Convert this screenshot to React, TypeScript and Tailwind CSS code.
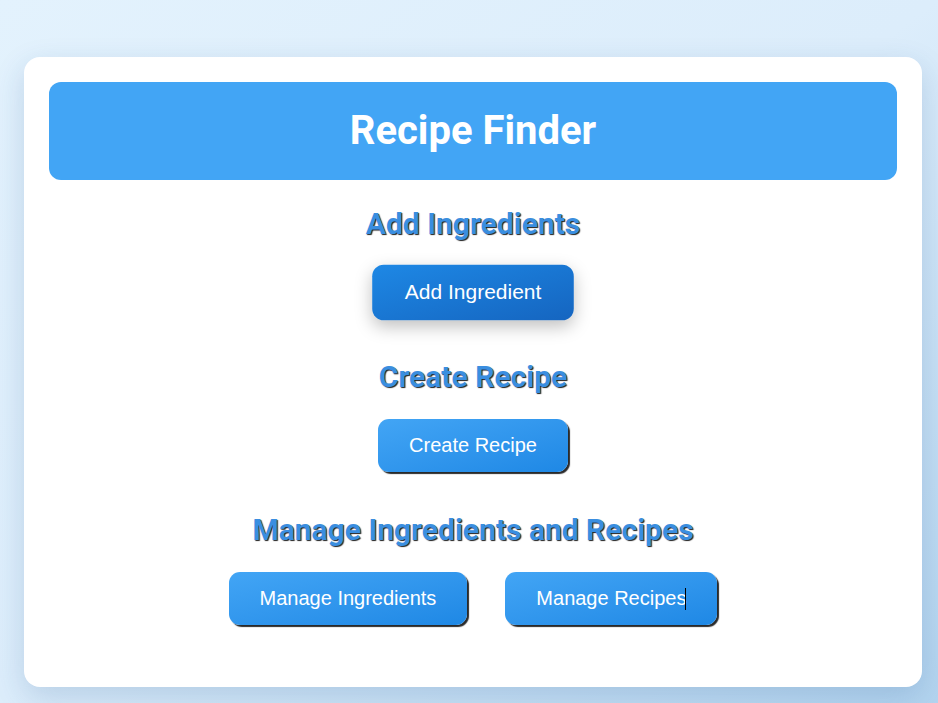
const sections = [
    { title: "Add Ingredients", buttons: ["Add Ingredient"] },
    { title: "Create Recipe", buttons: ["Create Recipe"] },
    { title: "Manage Ingredients and Recipes", buttons: ["Manage Ingredients", "Manage Recipes"] },
];

const Button: React.FC<{ label: string; hovered?: boolean; caret?: boolean }> = ({ label, hovered, caret }) => (
    <button
        className={
            hovered
                ? "cursor-pointer rounded-[11px] px-[31px] py-[15px] text-[20px] leading-[23px] text-white scale-[1.05] bg-gradient-to-br from-[#1e88e5] to-[#1565c0] shadow-[0_6px_16px_rgba(0,0,0,0.25)]"
                : "cursor-pointer rounded-[11px] px-[31px] py-[15px] text-[20px] leading-[23px] text-white bg-gradient-to-br from-[#42a5f5] to-[#1e88e5] shadow-[2px_2px_1px_#2a2a2a]"
        }
        style={{ fontFamily: '"Liberation Sans", Arial, sans-serif' }}
    >
        {label}
        {caret && <span className="inline-block w-px h-[22px] bg-black align-middle -ml-[1px] -mt-[2px]" />}
    </button>
);

export default function App() {
    return (
        <main
            className="min-h-[703px] w-full pl-[24px] pr-[16px] pt-[57px] pb-[16px] bg-gradient-to-br from-[#e3f2fd] via-[#dcedfb] to-[#b3d4ef]"
            style={{ fontFamily: 'Roboto, "Liberation Sans", sans-serif' }}
        >
            <div className="bg-white rounded-[16px] p-[25px] shadow-[0_10px_30px_rgba(30,80,140,0.18)]">
                <header className="bg-[#42a5f5] rounded-[12px] py-[25px] text-center mb-[26px]">
                    <h1 className="text-white text-[40px] leading-[48px] font-bold">Recipe Finder</h1>
                </header>

                {sections.map((section, i) => (
                    <section key={section.title} className={i === sections.length - 1 ? "mb-[37px] text-center" : "mb-[40px] text-center"}>
                        <h2 className="text-[30px] leading-[36px] font-bold text-[#3a8ee0] mb-[24px] [text-shadow:1px_1px_1px_#1f1f1f]">
                            {section.title}
                        </h2>
                        <div className="flex justify-center gap-[38px]">
                            {section.buttons.map((label) => (
                                <Button
                                    key={label}
                                    label={label}
                                    hovered={label === "Add Ingredient"}
                                    caret={label === "Manage Recipes"}
                                />
                            ))}
                        </div>
                    </section>
                ))}
            </div>
        </main>
    )
}
